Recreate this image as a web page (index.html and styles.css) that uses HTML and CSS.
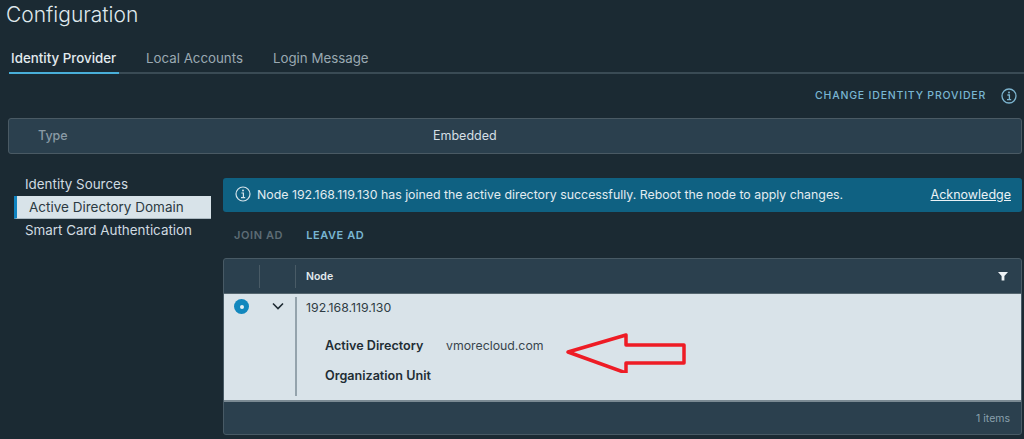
FILE: index.html
```html
<!DOCTYPE html>
<html lang="en">
<head>
<meta charset="utf-8">
<title>Configuration</title>
<link rel="stylesheet" href="styles.css">
</head>
<body>
<h1 class="title">Configuration</h1>
<nav class="tabs">
  <a class="tab tab-active">Identity Provider</a>
  <a class="tab">Local Accounts</a>
  <a class="tab">Login Message</a>
</nav>
<div class="actions">
  <a class="action-link">CHANGE IDENTITY PROVIDER</a>
  <svg class="info-icon" viewBox="0 0 16 16" width="16" height="16"><circle cx="8" cy="8" r="7" fill="none" stroke="#7cb4cf" stroke-width="1.3"/><circle cx="8" cy="4.6" r="1" fill="#7cb4cf"/><path d="M6.4 7h2v4.4M6 11.6h4.2" fill="none" stroke="#7cb4cf" stroke-width="1.3"/></svg>
</div>
<div class="type-bar">
  <span class="type-label">Type</span>
  <span class="type-value">Embedded</span>
</div>
<div class="main">
  <aside class="side">
    <div class="side-item">Identity Sources</div>
    <div class="side-item side-active">Active Directory Domain</div>
    <div class="side-item">Smart Card Authentication</div>
  </aside>
  <section class="content">
    <div class="banner">
      <svg class="banner-icon" viewBox="0 0 16 16" width="16" height="16"><circle cx="8" cy="8" r="7" fill="none" stroke="#d5e3ea" stroke-width="1.2"/><circle cx="8" cy="4.6" r="1" fill="#d5e3ea"/><path d="M6.4 7h2v4.4M6 11.6h4.2" fill="none" stroke="#d5e3ea" stroke-width="1.2"/></svg>
      <span class="banner-text">Node 192.168.119.130 has joined the active directory successfully. Reboot the node to apply changes.</span>
      <a class="banner-link">Acknowledge</a>
    </div>
    <div class="buttons">
      <span class="btn btn-off">JOIN AD</span>
      <span class="btn">LEAVE AD</span>
    </div>
    <div class="grid">
      <div class="grid-head">
        <div class="cell-a"><i class="sep"></i></div>
        <div class="cell-b"><i class="sep"></i></div>
        <div class="head-node">Node</div>
        <svg class="filter" viewBox="0 0 10 10" width="10" height="10"><path d="M0 1h10L6.4 5v4.6H3.6V5z" fill="#eef3f6"/></svg>
      </div>
      <div class="grid-row">
        <div class="col-radio"><span class="radio"><span class="radio-dot"></span></span></div>
        <div class="col-caret"><svg viewBox="0 0 12 8" width="12" height="8"><path d="M1 1.5l5 5 5-5" fill="none" stroke="#1f2b33" stroke-width="1.6"/></svg></div>
        <div class="col-body">
          <div class="node-ip">192.168.119.130</div>
          <div class="detail detail-first"><b class="detail-key">Active Directory</b><span class="detail-val">vmorecloud.com</span></div>
          <div class="detail"><b class="detail-key">Organization Unit</b></div>
        </div>
        <svg class="arrow" viewBox="0 0 122 40" width="122" height="40"><path d="M2 19L60 2v10h58v18H60v10z" fill="none" stroke="#ee1c25" stroke-width="3.5" stroke-linejoin="round"/></svg>
      </div>
      <div class="grid-foot">1 items</div>
    </div>
  </section>
</div>
</body>
</html>
```
FILE: styles.css
```css
* { box-sizing: border-box; }
html, body { height: 100%; }
body {
  margin: 0;
  background: #1b2a33;
  color: #d9e4ea;
  font-family: Inter, "Noto Sans", "Liberation Sans", sans-serif;
  font-size: 13.4px;
  overflow: hidden;
}
.title {
  margin: 0;
  padding: 3px 0 0 6px;
  height: 44px;
  font-size: 21px;
  line-height: 24px;
  font-weight: 300;
  color: #dfe8ed;
}
.tabs {
  display: flex;
  height: 30px;
  margin-left: 9px;
  gap: 24px;
  border-bottom: 2px solid #3a4b55;
}
.tab {
  padding: 6px 3px 0;
  height: 30px;
  line-height: 17px;
  color: #9aa9b2;
  font-size: 13.3px;
}
.tab-active {
  padding: 6px 2px 0;
  width: 110px;
  color: #e3ebef;
  border-bottom: 2px solid #49afd9;
  font-weight: 500;
  font-size: 13.35px;
  white-space: nowrap;
}
.actions {
  display: flex;
  justify-content: flex-end;
  align-items: center;
  height: 44px;
  padding: 0 7px 1px 0;
  gap: 15px;
}
.action-link {
  font-size: 10.5px;
  font-weight: 500;
  letter-spacing: 0.8px;
  color: #79b6d2;
}
.type-bar {
  display: flex;
  height: 36px;
  margin: 0 2px 0 8px;
  padding-bottom: 2px;
  align-items: center;
  background: #2b404e;
  border: 1px solid #4a5a64;
  border-radius: 3px;
}
.type-label {
  width: 424px;
  padding-left: 29px;
  font-size: 12.5px;
  font-weight: 500;
  color: #8a9ba6;
}
.type-value {
  font-size: 12.5px;
  font-weight: 400;
  color: #d5dfe5;
}
.main {
  display: flex;
  padding: 19px 2px 0 14px;
}
.side {
  width: 197px;
  margin-right: 12px;
}
.side-item {
  height: 23px;
  padding-left: 11px;
  line-height: 22px;
  color: #d0dbe1;
}
.side-active {
  background: #d8e3e9;
  color: #2c3a42;
  border-left: 3px solid #0f83c0;
  border-bottom: 1px solid #aab8c0;
  padding-left: 12px;
  font-size: 13.5px;
}
.content {
  flex: 1;
  padding-top: 5px;
}
.banner {
  display: flex;
  align-items: center;
  height: 34px;
  padding: 0 11px 2px 12px;
  background: #0f6182;
  border-radius: 3px;
  color: #e2ecf1;
}
.banner-text {
  flex: 1;
  margin-left: 6px;
  font-size: 12.35px;
}
.banner-link {
  text-decoration: underline;
  color: #eaf2f6;
  font-size: 12.5px;
}
.buttons {
  display: flex;
  height: 46px;
  padding: 0 0 1px 11px;
  gap: 23px;
  align-items: center;
  font-size: 11px;
  font-weight: 600;
  letter-spacing: 0.6px;
}
.btn { color: #79b6d2; }
.btn-off { color: #5d6c75; }
.grid {
  height: 177px;
  display: flex;
  flex-direction: column;
  border: 1px solid #485a65;
  border-radius: 3px;
  background: #2b404e;
}
.grid-head {
  display: flex;
  align-items: center;
  flex: none;
  height: 35px;
  padding-right: 13px;
  border-bottom: 1px solid #55666f;
}
.cell-a { width: 36px; display: flex; justify-content: flex-end; }
.cell-b { width: 36px; display: flex; justify-content: flex-end; }
.sep { width: 1px; height: 23px; background: #495b66; }
.head-node {
  flex: 1;
  padding-left: 10px;
  font-size: 10.5px;
  font-weight: 600;
  color: #e3ebef;
}
.filter { flex: none; }
.grid-row {
  position: relative;
  display: flex;
  height: 108px;
  flex: none;
  padding-top: 3px;
  background: #d9e3e9;
  color: #2f3c44;
  border-bottom: 2px solid #7b8a93;
}
.col-radio { width: 36px; padding: 2px 0 0 10px; }
.radio {
  display: flex;
  width: 15px;
  height: 15px;
  align-items: center;
  justify-content: center;
  border-radius: 50%;
  background: #1287bd;
}
.radio-dot { width: 4px; height: 4px; border-radius: 50%; background: #e6eff4; }
.col-caret { width: 35px; padding: 0 0 0 12px; }
.col-body {
  flex: 1;
  margin-bottom: 4px;
  padding: 3px 0 0 9px;
  border-left: 2px solid #94a3ac;
}
.node-ip { font-size: 12.3px; line-height: 16px; }
.detail {
  display: flex;
  margin-left: 19px;
  height: 30px;
  line-height: 30px;
  font-size: 12.6px;
}
.detail-first { margin-top: 15px; }
.detail-key { width: 121px; font-weight: 600; color: #222d34; }
.detail-val { font-size: 12.3px; color: #38454d; }
.arrow { position: absolute; left: 342px; top: 39px; }
.grid-foot {
  flex: 1;
  padding: 0 11px 0 0;
  display: flex;
  align-items: center;
  justify-content: flex-end;
  font-size: 10.5px;
  color: #8aa0ad;
}
```
